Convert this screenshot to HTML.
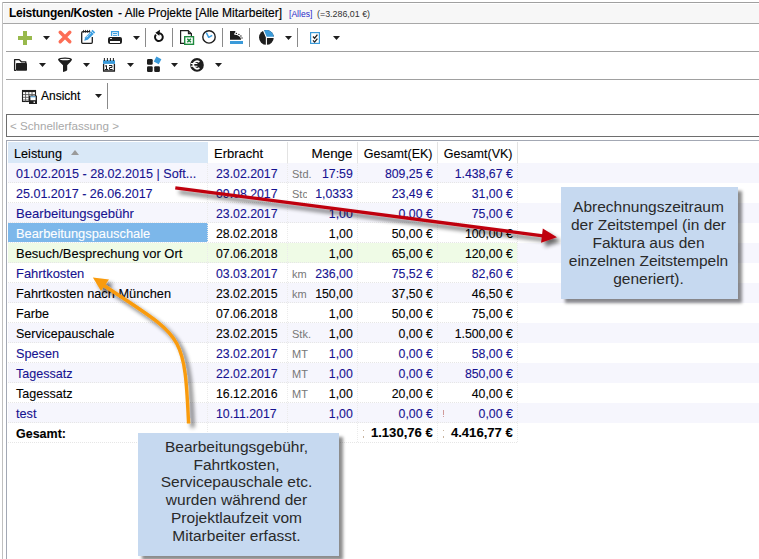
<!DOCTYPE html>
<html><head><meta charset="utf-8">
<style>
html,body{margin:0;padding:0;}
body{width:759px;height:559px;position:relative;overflow:hidden;background:#fff;font-family:"Liberation Sans",sans-serif;color:#000;}
.a{position:absolute;}
.t{position:absolute;white-space:pre;line-height:1;}
.hl{position:absolute;height:1px;}
.vl{position:absolute;width:1px;}
.dd{position:absolute;width:0;height:0;border-left:3.5px solid transparent;border-right:3.5px solid transparent;border-top:4px solid #111;}
.sep{position:absolute;width:1px;background:#8a8a8a;}
.row{position:absolute;left:8px;width:751px;height:20px;}
.tint{background:#f6f6fd;}
.dot{position:absolute;height:1px;background-image:linear-gradient(to right,#e6e6e6 50%,transparent 50%);background-size:2px 1px;}
.dotv{position:absolute;width:1px;background-image:linear-gradient(to bottom,#ebebeb 50%,transparent 50%);background-size:1px 2px;}
.cell{position:absolute;white-space:pre;font-size:13px;line-height:1;-webkit-text-stroke:0.1px currentColor;}
.nv{color:#161390;}
.num{font-size:12.3px;}
.unit{position:absolute;white-space:pre;font-size:11px;color:#777;line-height:1;}
.callout{position:absolute;background:#c6d9f0;box-shadow:4px 4px 3px rgba(0,0,0,0.45);font-family:"Liberation Sans",sans-serif;font-size:15.5px;color:#2a2a2a;text-align:center;line-height:17.7px;}
</style></head><body>

<!-- outer frame -->
<div class="a" style="left:2px;top:2px;width:757px;height:1px;background:#a0a0a0"></div>
<div class="a" style="left:2px;top:2px;width:1px;height:557px;background:#c0c0c0"></div>
<!-- title bar -->
<div class="a" style="left:4px;top:4px;width:755px;height:19px;background:#f7f7f7"></div>
<div class="a" style="left:3px;top:23px;width:756px;height:1px;background:#a8a8a8"></div>
<span class="t" style="left:9px;top:7px;font-size:12px;font-weight:bold;letter-spacing:-0.25px">Leistungen/Kosten</span>
<span class="t" style="left:118px;top:7px;font-size:12px;-webkit-text-stroke:0.15px #000">- Alle Projekte [Alle Mitarbeiter]</span>
<span class="t" style="left:289px;top:10px;font-size:8.6px;color:#2a2ac8">[Alles]</span>
<span class="t" style="left:317px;top:10px;font-size:8.9px;color:#333">(=3.286,01 €)</span>

<!-- toolbar separators -->
<div class="hl" style="left:6px;top:51px;width:753px;background:#a0a0a0"></div>
<div class="hl" style="left:6px;top:79px;width:753px;background:#a0a0a0"></div>

<!-- toolbar 1 icons -->
<svg class="a" id="icons" style="left:0;top:0" width="759" height="110" viewBox="0 0 759 110">
<g fill="#1e1e1e">
<path d="M43 36H50L46.5 40Z"/><path d="M133 36H140L136.5 40Z"/><path d="M285 36H292L288.5 40Z"/><path d="M333 36H340L336.5 40Z"/>
<path d="M39 63H46L42.5 67Z"/><path d="M83 63H90L86.5 67Z"/><path d="M127 63H134L130.5 67Z"/><path d="M171 63H178L174.5 67Z"/><path d="M215 63H222L218.5 67Z"/>
<path d="M95 94H102L98.5 98Z"/>
</g>
<!-- plus -->
<path d="M18 36H23V31H27V36H32V40H27V45H23V40H18Z" fill="#98b94c"/>
<!-- X -->
<path d="M60.2 32.2L69.8 41.8M69.8 32.2L60.2 41.8" stroke="#fd6d55" stroke-width="3.4" stroke-linecap="round"/>
<!-- notepad -->
<path d="M89 31.7H83Q81.7 31.7 81.7 33V42.3Q81.7 43.3 82.7 43.3H91.3Q92.3 43.3 92.3 42.3V37" stroke="#1e1e1e" stroke-width="1.3" fill="none"/>
<g fill="#1e1e1e"><ellipse cx="83.6" cy="31.2" rx="0.55" ry="1.5"/><ellipse cx="85.6" cy="31.2" rx="0.55" ry="1.5"/><ellipse cx="87.6" cy="31.2" rx="0.55" ry="1.5"/><ellipse cx="89.6" cy="31.2" rx="0.55" ry="1.5"/></g>
<path d="M84.2 40.8L85.2 37.2L92.6 29.8L95.2 32.4L87.8 39.8Z" fill="#3c9ee0"/>
<path d="M86.5 37.3L88.3 35.5M89.2 34.6L90.6 33.2" stroke="#fff" stroke-width="0.8"/>
<path d="M91.3 31.2L93.9 33.8" stroke="#fff" stroke-width="0.8"/>
<!-- printer -->
<path d="M111.6 36V31.6H118.4V36" stroke="#3c9ee0" stroke-width="1.3" fill="none"/>
<path d="M113 33.5H117M113 35.4H117" stroke="#3c9ee0" stroke-width="1"/>
<rect x="108" y="37" width="14" height="7" rx="2" fill="#1e1e1e"/>
<rect x="110" y="41" width="10" height="2" fill="#fff"/>
<rect x="110" y="38" width="2" height="1" fill="#fff" opacity="0.85"/>
<!-- refresh -->
<path d="M159 33.2A3.9 3.9 0 1 1 155.9 34.6" stroke="#111" stroke-width="2" fill="none"/>
<path d="M155.4 32.7L160 29.8L159.3 35.7Z" fill="#111"/>
<!-- excel doc -->
<path d="M184 43.4H180.6V30.6H188.2L191.4 33.8V36" stroke="#1e1e1e" stroke-width="1.2" fill="none"/>
<path d="M188.4 30.6V33.6H191.4" stroke="#1e1e1e" stroke-width="1.1" fill="none"/>
<rect x="184.7" y="36.7" width="8.8" height="7.6" stroke="#1e8a3e" stroke-width="1.4" fill="#fff"/>
<path d="M187.3 38.8L190.9 42.3M190.9 38.8L187.3 42.3" stroke="#1e8a3e" stroke-width="1.6"/>
<!-- clock -->
<circle cx="209" cy="36.9" r="6.2" stroke="#1e1e1e" stroke-width="1.4" fill="none"/>
<path d="M206.3 32.6L208.7 37.3L212.2 35.3" stroke="#3c9ee0" stroke-width="1.5" fill="none" stroke-linejoin="round"/>
<!-- cashbox -->
<path d="M230 31H235.3V32.4Q234.3 32.6 234.3 33.6V34.8A6.8 5 0 0 1 241.1 39.8H230Z" fill="#1e1e1e"/>
<g fill="#1e1e1e"><circle cx="236.4" cy="33.4" r="0.7"/><circle cx="238.9" cy="34.4" r="0.7"/><circle cx="240.9" cy="36" r="0.7"/><circle cx="242" cy="38" r="0.7"/></g>
<rect x="230" y="41" width="13" height="3" fill="#3a9ad9"/>
<!-- pie -->
<circle cx="266.4" cy="37.4" r="7.4" fill="#1e1e1e"/>
<path d="M266.4 37.4L263.6 30.5A7.4 7.4 0 0 1 273.8 37.4Z" fill="#3a9ad9"/>
<path d="M266.4 37.4L262.8 29M266 37.4L275 37.4M266.4 37L266.4 46" stroke="#fff" stroke-width="1.1"/>
<!-- checklist -->
<rect x="310.6" y="32.6" width="8.8" height="10.8" stroke="#3a9ad9" stroke-width="1.2" fill="none"/>
<path d="M313 36.5L314.6 38.2L317.4 34.7M313 40.4L314.6 42.1L317.4 38.6" stroke="#1e1e1e" stroke-width="1.3" fill="none"/>
<!-- folder -->
<path d="M16 70.3H14.6V59.6H19.2L21.4 61.8H25.8V63" stroke="#1e1e1e" stroke-width="1.3" fill="none" stroke-linejoin="round"/>
<rect x="16" y="63" width="11" height="7.8" rx="0.8" fill="#1e1e1e"/>
<!-- funnel -->
<path d="M58 59.6A7 2.1 0 0 1 72 59.6Q71.6 61.2 67.2 65.2V70Q67 71.3 63 71.9V65.2Q58.4 61.2 58 59.6Z" fill="#1e1e1e"/>
<ellipse cx="65" cy="59.5" rx="5.2" ry="0.8" fill="#fff"/>
<!-- calendar -->
<rect x="103" y="60.3" width="12" height="3.6" fill="#3a9ad9"/>
<path d="M103.6 63.9V71H114.4V63.9" stroke="#1e1e1e" stroke-width="1.3" fill="none"/>
<path d="M104.4 58V61M107.4 58V61M110.4 58V61M113.4 58V61" stroke="#1e1e1e" stroke-width="1"/>
<path d="M105 66.2L106.5 65.5V69.5M104.8 69.5H108.2M109 65.5H112V67.5H109.5V69.5H112.6" stroke="#1e1e1e" stroke-width="1" fill="none"/>
<!-- blocks -->
<g fill="#1e1e1e"><rect x="147" y="59" width="5.7" height="5.7" rx="1.2"/><rect x="147" y="66.2" width="5.7" height="5.7" rx="1.2"/><rect x="154.2" y="66.2" width="5.7" height="5.7" rx="1.2"/></g>
<rect x="154.8" y="57.6" width="5.6" height="5.6" fill="#3a9ad9" transform="rotate(28 157.6 60.4)"/>
<!-- euro -->
<circle cx="197" cy="64.9" r="6.8" fill="#1e1e1e"/>
<path d="M199.4 62A3.7 3.7 0 1 0 199.4 67.8" stroke="#fff" stroke-width="1.7" fill="none"/>
<path d="M191 63.5H197.4M191 66.3H197.4" stroke="#fff" stroke-width="1.1"/>
<!-- ansicht icon -->
<rect x="22.5" y="90.5" width="13" height="11" fill="#fff" stroke="#1e1e1e" stroke-width="1.1"/>
<rect x="22.5" y="90.5" width="13" height="1.6" fill="#1e1e1e"/>
<path d="M25.6 92V101.5M28.8 92V101.5M32 92V101.5M23 94.6H35.5M23 97.3H35.5M23 100H29" stroke="#555" stroke-width="0.9"/>
<rect x="29" y="95.6" width="8" height="8.4" fill="#1e1e1e"/>
<rect x="30.4" y="96.4" width="5.2" height="3.8" fill="#fff"/>
<rect x="30.4" y="96.4" width="5.2" height="0.9" fill="#3c9ee0"/>
<rect x="33.6" y="101.5" width="1.3" height="1.5" fill="#fff"/>
</svg>
<div class="sep" style="left:145px;top:28px;height:19px"></div>
<div class="sep" style="left:172px;top:28px;height:19px"></div>
<div class="sep" style="left:222px;top:28px;height:19px"></div>
<div class="sep" style="left:249px;top:28px;height:19px"></div>
<div class="sep" style="left:297px;top:28px;height:19px"></div>

<!-- toolbar 2 -->

<!-- toolbar 3 -->
<span class="t" style="left:41px;top:90px;font-size:12px;-webkit-text-stroke:0.15px #000">Ansicht</span>
<div class="sep" style="left:107px;top:83px;height:26px;background:#8a8a8a"></div>

<!-- Schnellerfassung -->
<div class="a" style="left:6px;top:114px;width:760px;height:21px;border:1px solid #6e6e6e;"></div>
<span class="t" style="left:10px;top:120px;font-size:11.6px;color:#a8a8a8">&lt; Schnellerfassung &gt;</span>

<!-- grid -->
<div class="a" style="left:6px;top:140px;width:753px;height:1px;background:#a3a8b4"></div>
<div class="a" style="left:6px;top:140px;width:1px;height:419px;background:#a3a8b4"></div>
<div class="a" style="left:8px;top:142px;width:200px;height:21px;background:#d9e8f7"></div>
<div id="grid">
<span class="cell" style="left:14px;top:148px;font-size:12.7px">Leistung</span>
<div class="a" style="left:71px;top:150px;width:0;height:0;border-left:4.5px solid transparent;border-right:4.5px solid transparent;border-bottom:5px solid #9a9a9a"></div>
<span class="cell" style="left:214px;top:147px;font-size:13px">Erbracht</span>
<span class="cell" style="left:352.5px;top:147.3px;font-size:13.4px;transform:translateX(-100%)">Menge</span>
<span class="cell" style="left:432.5px;top:148px;font-size:12.5px;transform:translateX(-100%)">Gesamt(EK)</span>
<span class="cell" style="left:512.5px;top:148px;font-size:12.5px;transform:translateX(-100%)">Gesamt(VK)</span>
<div class="vl" style="left:287px;top:142px;height:21px;background:#e3e3e3"></div>
<div class="vl" style="left:357px;top:142px;height:21px;background:#e3e3e3"></div>
<div class="vl" style="left:437px;top:142px;height:21px;background:#e3e3e3"></div>
<div class="vl" style="left:517px;top:142px;height:21px;background:#e3e3e3"></div>
<div class="a tint" style="left:8px;top:163px;width:751px;height:20px"></div>
<div class="dot" style="left:8px;top:182px;width:509px"></div>
<div class="dotv" style="left:207px;top:163px;height:20px"></div>
<div class="dotv" style="left:287px;top:163px;height:20px"></div>
<div class="dotv" style="left:357px;top:163px;height:20px"></div>
<div class="dotv" style="left:437px;top:163px;height:20px"></div>
<div class="dotv" style="left:517px;top:163px;height:20px"></div>
<span class="cell nv" style="left:16px;top:168.02px;font-size:12.58px;">01.02.2015 - 28.02.2015 | Soft...</span>
<span class="cell num nv" style="left:216px;top:167.5px">23.02.2017</span>
<span class="unit" style="left:292px;top:168.5px;">Std.</span>
<span class="cell num nv" style="left:352.8px;top:167.5px;transform:translateX(-100%)">17:59</span>
<span class="cell num nv" style="left:432.8px;top:167.5px;transform:translateX(-100%)">809,25 €</span>
<span class="cell num nv" style="left:512.8px;top:167.5px;transform:translateX(-100%)">1.438,67 €</span>
<div class="dot" style="left:8px;top:202px;width:509px"></div>
<div class="dotv" style="left:207px;top:183px;height:20px"></div>
<div class="dotv" style="left:287px;top:183px;height:20px"></div>
<div class="dotv" style="left:357px;top:183px;height:20px"></div>
<div class="dotv" style="left:437px;top:183px;height:20px"></div>
<div class="dotv" style="left:517px;top:183px;height:20px"></div>
<span class="cell nv" style="left:16px;top:188.05px;font-size:12.54px;">25.01.2017 - 26.06.2017</span>
<span class="cell num nv" style="left:216px;top:187.5px">09.08.2017</span>
<span class="unit" style="left:292px;top:188.5px;width:15px;overflow:hidden;">Stc</span>
<span class="cell num nv" style="left:352.8px;top:187.5px;transform:translateX(-100%)">1,0333</span>
<span class="cell num nv" style="left:432.8px;top:187.5px;transform:translateX(-100%)">23,49 €</span>
<span class="cell num nv" style="left:512.8px;top:187.5px;transform:translateX(-100%)">31,00 €</span>
<div class="a tint" style="left:8px;top:203px;width:751px;height:20px"></div>
<div class="dot" style="left:8px;top:222px;width:509px"></div>
<div class="dotv" style="left:207px;top:203px;height:20px"></div>
<div class="dotv" style="left:287px;top:203px;height:20px"></div>
<div class="dotv" style="left:357px;top:203px;height:20px"></div>
<div class="dotv" style="left:437px;top:203px;height:20px"></div>
<div class="dotv" style="left:517px;top:203px;height:20px"></div>
<span class="cell nv" style="left:16px;top:206.98px;font-size:13.1px;">Bearbeitungsgebühr</span>
<span class="cell num nv" style="left:216px;top:207.5px">23.02.2017</span>
<span class="cell num nv" style="left:352.8px;top:207.5px;transform:translateX(-100%)">1,00</span>
<span class="cell num nv" style="left:432.8px;top:207.5px;transform:translateX(-100%)">0,00 €</span>
<span class="cell num nv" style="left:512.8px;top:207.5px;transform:translateX(-100%)">75,00 €</span>
<div class="a" style="left:8px;top:223px;width:200px;height:19px;background:#7cb7ea"></div>
<div class="dot" style="left:8px;top:242px;width:509px"></div>
<div class="dotv" style="left:207px;top:223px;height:20px"></div>
<div class="dotv" style="left:287px;top:223px;height:20px"></div>
<div class="dotv" style="left:357px;top:223px;height:20px"></div>
<div class="dotv" style="left:437px;top:223px;height:20px"></div>
<div class="dotv" style="left:517px;top:223px;height:20px"></div>
<span class="cell " style="left:16px;top:227.79px;font-size:12.85px;color:#fff;">Bearbeitungspauschale</span>
<span class="cell num " style="left:216px;top:227.5px">28.02.2018</span>
<span class="cell num " style="left:352.8px;top:227.5px;transform:translateX(-100%)">1,00</span>
<span class="cell num " style="left:432.8px;top:227.5px;transform:translateX(-100%)">50,00 €</span>
<span class="cell num " style="left:512.8px;top:227.5px;transform:translateX(-100%)">100,00 €</span>
<div class="a tint" style="left:8px;top:243px;width:751px;height:20px"></div>
<div class="a" style="left:8px;top:243px;width:509px;height:20px;background:#effbe6"></div>
<div class="dot" style="left:8px;top:262px;width:509px"></div>
<div class="dotv" style="left:207px;top:243px;height:20px"></div>
<div class="dotv" style="left:287px;top:243px;height:20px"></div>
<div class="dotv" style="left:357px;top:243px;height:20px"></div>
<div class="dotv" style="left:437px;top:243px;height:20px"></div>
<div class="dotv" style="left:517px;top:243px;height:20px"></div>
<span class="cell " style="left:16px;top:247.70px;font-size:12.96px;">Besuch/Besprechung vor Ort</span>
<span class="cell num " style="left:216px;top:247.5px">07.06.2018</span>
<span class="cell num " style="left:352.8px;top:247.5px;transform:translateX(-100%)">1,00</span>
<span class="cell num " style="left:432.8px;top:247.5px;transform:translateX(-100%)">65,00 €</span>
<span class="cell num " style="left:512.8px;top:247.5px;transform:translateX(-100%)">120,00 €</span>
<div class="dot" style="left:8px;top:282px;width:509px"></div>
<div class="dotv" style="left:207px;top:263px;height:20px"></div>
<div class="dotv" style="left:287px;top:263px;height:20px"></div>
<div class="dotv" style="left:357px;top:263px;height:20px"></div>
<div class="dotv" style="left:437px;top:263px;height:20px"></div>
<div class="dotv" style="left:517px;top:263px;height:20px"></div>
<span class="cell nv" style="left:16px;top:267.71px;font-size:12.94px;">Fahrtkosten</span>
<span class="cell num nv" style="left:216px;top:267.5px">03.03.2017</span>
<span class="unit" style="left:292px;top:268.5px;">km</span>
<span class="cell num nv" style="left:352.8px;top:267.5px;transform:translateX(-100%)">236,00</span>
<span class="cell num nv" style="left:432.8px;top:267.5px;transform:translateX(-100%)">75,52 €</span>
<span class="cell num nv" style="left:512.8px;top:267.5px;transform:translateX(-100%)">82,60 €</span>
<div class="a tint" style="left:8px;top:283px;width:751px;height:20px"></div>
<div class="dot" style="left:8px;top:302px;width:509px"></div>
<div class="dotv" style="left:207px;top:283px;height:20px"></div>
<div class="dotv" style="left:287px;top:283px;height:20px"></div>
<div class="dotv" style="left:357px;top:283px;height:20px"></div>
<div class="dotv" style="left:437px;top:283px;height:20px"></div>
<div class="dotv" style="left:517px;top:283px;height:20px"></div>
<span class="cell " style="left:16px;top:287.83px;font-size:12.8px;">Fahrtkosten nach München</span>
<span class="cell num " style="left:216px;top:287.5px">23.02.2015</span>
<span class="unit" style="left:292px;top:288.5px;">km</span>
<span class="cell num " style="left:352.8px;top:287.5px;transform:translateX(-100%)">150,00</span>
<span class="cell num " style="left:432.8px;top:287.5px;transform:translateX(-100%)">37,50 €</span>
<span class="cell num " style="left:512.8px;top:287.5px;transform:translateX(-100%)">46,50 €</span>
<div class="dot" style="left:8px;top:322px;width:509px"></div>
<div class="dotv" style="left:207px;top:303px;height:20px"></div>
<div class="dotv" style="left:287px;top:303px;height:20px"></div>
<div class="dotv" style="left:357px;top:303px;height:20px"></div>
<div class="dotv" style="left:437px;top:303px;height:20px"></div>
<div class="dotv" style="left:517px;top:303px;height:20px"></div>
<span class="cell " style="left:16px;top:307.99px;font-size:12.61px;">Farbe</span>
<span class="cell num " style="left:216px;top:307.5px">07.06.2018</span>
<span class="cell num " style="left:352.8px;top:307.5px;transform:translateX(-100%)">1,00</span>
<span class="cell num " style="left:432.8px;top:307.5px;transform:translateX(-100%)">50,00 €</span>
<span class="cell num " style="left:512.8px;top:307.5px;transform:translateX(-100%)">75,00 €</span>
<div class="a tint" style="left:8px;top:323px;width:751px;height:20px"></div>
<div class="dot" style="left:8px;top:342px;width:509px"></div>
<div class="dotv" style="left:207px;top:323px;height:20px"></div>
<div class="dotv" style="left:287px;top:323px;height:20px"></div>
<div class="dotv" style="left:357px;top:323px;height:20px"></div>
<div class="dotv" style="left:437px;top:323px;height:20px"></div>
<div class="dotv" style="left:517px;top:323px;height:20px"></div>
<span class="cell " style="left:16px;top:328.09px;font-size:12.49px;">Servicepauschale</span>
<span class="cell num " style="left:216px;top:327.5px">23.02.2015</span>
<span class="unit" style="left:292px;top:328.5px;">Stk.</span>
<span class="cell num " style="left:352.8px;top:327.5px;transform:translateX(-100%)">1,00</span>
<span class="cell num " style="left:432.8px;top:327.5px;transform:translateX(-100%)">0,00 €</span>
<span class="cell num " style="left:512.8px;top:327.5px;transform:translateX(-100%)">1.500,00 €</span>
<div class="dot" style="left:8px;top:362px;width:509px"></div>
<div class="dotv" style="left:207px;top:343px;height:20px"></div>
<div class="dotv" style="left:287px;top:343px;height:20px"></div>
<div class="dotv" style="left:357px;top:343px;height:20px"></div>
<div class="dotv" style="left:437px;top:343px;height:20px"></div>
<div class="dotv" style="left:517px;top:343px;height:20px"></div>
<span class="cell nv" style="left:16px;top:347.92px;font-size:12.69px;">Spesen</span>
<span class="cell num nv" style="left:216px;top:347.5px">23.02.2017</span>
<span class="unit" style="left:292px;top:348.5px;">MT</span>
<span class="cell num nv" style="left:352.8px;top:347.5px;transform:translateX(-100%)">1,00</span>
<span class="cell num nv" style="left:432.8px;top:347.5px;transform:translateX(-100%)">0,00 €</span>
<span class="cell num nv" style="left:512.8px;top:347.5px;transform:translateX(-100%)">58,00 €</span>
<div class="a tint" style="left:8px;top:363px;width:751px;height:20px"></div>
<div class="dot" style="left:8px;top:382px;width:509px"></div>
<div class="dotv" style="left:207px;top:363px;height:20px"></div>
<div class="dotv" style="left:287px;top:363px;height:20px"></div>
<div class="dotv" style="left:357px;top:363px;height:20px"></div>
<div class="dotv" style="left:437px;top:363px;height:20px"></div>
<div class="dotv" style="left:517px;top:363px;height:20px"></div>
<span class="cell nv" style="left:16px;top:368.04px;font-size:12.55px;">Tagessatz</span>
<span class="cell num nv" style="left:216px;top:367.5px">22.02.2017</span>
<span class="unit" style="left:292px;top:368.5px;">MT</span>
<span class="cell num nv" style="left:352.8px;top:367.5px;transform:translateX(-100%)">1,00</span>
<span class="cell num nv" style="left:432.8px;top:367.5px;transform:translateX(-100%)">0,00 €</span>
<span class="cell num nv" style="left:512.8px;top:367.5px;transform:translateX(-100%)">850,00 €</span>
<div class="dot" style="left:8px;top:402px;width:509px"></div>
<div class="dotv" style="left:207px;top:383px;height:20px"></div>
<div class="dotv" style="left:287px;top:383px;height:20px"></div>
<div class="dotv" style="left:357px;top:383px;height:20px"></div>
<div class="dotv" style="left:437px;top:383px;height:20px"></div>
<div class="dotv" style="left:517px;top:383px;height:20px"></div>
<span class="cell " style="left:16px;top:388.04px;font-size:12.55px;">Tagessatz</span>
<span class="cell num " style="left:216px;top:387.5px">16.12.2016</span>
<span class="unit" style="left:292px;top:388.5px;">MT</span>
<span class="cell num " style="left:352.8px;top:387.5px;transform:translateX(-100%)">1,00</span>
<span class="cell num " style="left:432.8px;top:387.5px;transform:translateX(-100%)">20,00 €</span>
<span class="cell num " style="left:512.8px;top:387.5px;transform:translateX(-100%)">40,00 €</span>
<div class="a tint" style="left:8px;top:403px;width:751px;height:20px"></div>
<div class="dot" style="left:8px;top:422px;width:509px"></div>
<div class="dotv" style="left:207px;top:403px;height:20px"></div>
<div class="dotv" style="left:287px;top:403px;height:20px"></div>
<div class="dotv" style="left:357px;top:403px;height:20px"></div>
<div class="dotv" style="left:437px;top:403px;height:20px"></div>
<div class="dotv" style="left:517px;top:403px;height:20px"></div>
<span class="cell nv" style="left:16px;top:407.92px;font-size:12.69px;">test</span>
<span class="cell num nv" style="left:216px;top:407.5px">10.11.2017</span>
<span class="cell num nv" style="left:352.8px;top:407.5px;transform:translateX(-100%)">1,00</span>
<span class="cell num nv" style="left:432.8px;top:407.5px;transform:translateX(-100%)">0,00 €</span>
<span class="cell num nv" style="left:512.8px;top:407.5px;transform:translateX(-100%)">0,00 €</span>
<div class="dot" style="left:8px;top:442px;width:509px"></div>
<div class="dotv" style="left:207px;top:423px;height:20px"></div>
<div class="dotv" style="left:287px;top:423px;height:20px"></div>
<div class="dotv" style="left:357px;top:423px;height:20px"></div>
<div class="dotv" style="left:437px;top:423px;height:20px"></div>
<div class="dotv" style="left:517px;top:423px;height:20px"></div>
<span class="cell " style="left:16px;top:428.09px;font-size:12.49px;font-weight:bold;">Gesamt:</span>
<span class="cell num " style="left:432.8px;top:426.0px;font-weight:bold;font-size:13.1px;transform:translateX(-100%)">1.130,76 €</span>
<span class="cell num " style="left:512.8px;top:426.0px;font-weight:bold;font-size:13.1px;transform:translateX(-100%)">4.416,77 €</span>
<div class="a" style="left:443px;top:410px;width:1px;height:5px;background:#d09a9a"></div><div class="a" style="left:443px;top:416px;width:1px;height:1px;background:#d09a9a"></div>
<div class="a" style="left:363px;top:430px;width:1px;height:1px;background:#c8b4a0"></div><div class="a" style="left:363px;top:436px;width:1px;height:2px;background:#c8b4a0"></div>
<div class="a" style="left:443px;top:430px;width:1px;height:1px;background:#c8b4a0"></div><div class="a" style="left:443px;top:436px;width:1px;height:2px;background:#c8b4a0"></div>
</div><!--/grid-->

<!-- annotations -->
<svg class="a" style="left:0;top:0" width="759" height="559" viewBox="0 0 759 559">
<defs>
<filter id="sh" x="-20%" y="-20%" width="140%" height="140%"><feGaussianBlur in="SourceAlpha" stdDeviation="2.2"/><feOffset dx="3.5" dy="3.5"/><feComponentTransfer><feFuncA type="linear" slope="0.6"/></feComponentTransfer><feMerge><feMergeNode/><feMergeNode in="SourceGraphic"/></feMerge></filter>
</defs>
<g filter="url(#sh)">
<path d="M175.3 187.8 L543 235.8" stroke="#bf0510" stroke-width="3.3" fill="none"/>
<path d="M557 237.3 L542.8 228.6 L541 242.8 Z" fill="#bf0510"/>
</g>
<g filter="url(#sh)">
<path d="M188.6 423.5C184.3 331.1 183.2 338.3 104 285.5" stroke="#f99b0c" stroke-width="3.4" fill="none"/>
<path d="M92.9 277.6L109 279.4L101 291.1Z" fill="#f99b0c"/>
</g>
</svg>
<div class="callout" style="left:561px;top:187px;width:177px;height:112px;padding-top:11px;padding-right:2px;line-height:17.9px;box-sizing:border-box">Abrechnungszeitraum<br>der Zeitstempel (in der<br>Faktura aus den<br>einzelnen Zeitstempeln<br>generiert).</div>
<div class="callout" style="left:138px;top:433px;width:201px;height:123px;padding-top:5px;padding-right:4px;box-sizing:border-box">Bearbeitungsgebühr,<br>Fahrtkosten,<br>Servicepauschale etc.<br>wurden während der<br>Projektlaufzeit vom<br>Mitarbeiter erfasst.</div>

</body></html>
